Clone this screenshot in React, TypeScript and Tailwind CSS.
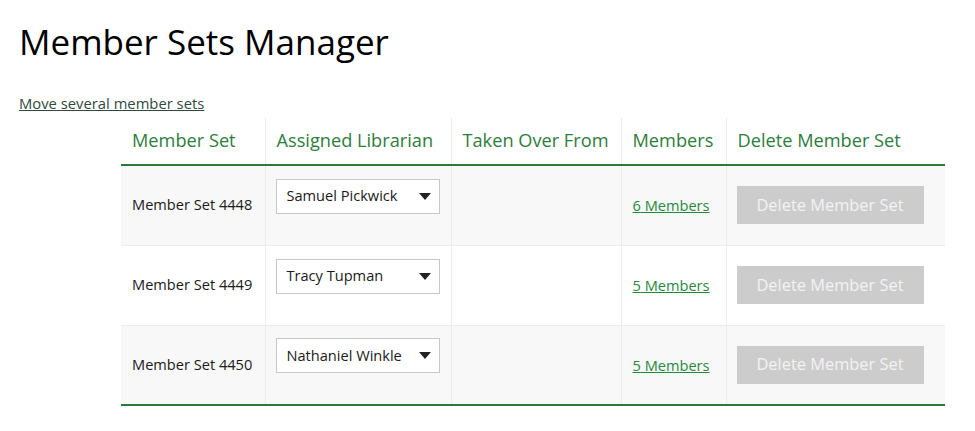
import { useState } from "react";

type MemberSet = {
  id: number;
  name: string;
  librarian: string;
  members: number;
};

const initialSets: MemberSet[] = [
  { id: 4448, name: "Member Set 4448", librarian: "Samuel Pickwick", members: 6 },
  { id: 4449, name: "Member Set 4449", librarian: "Tracy Tupman", members: 5 },
  { id: 4450, name: "Member Set 4450", librarian: "Nathaniel Winkle", members: 5 },
];

function LibrarianSelect({ value }: { value: string }) {
  return (
    <div className="mb-[18px] flex h-[35px] w-[164px] items-center justify-between border border-[#c8c8c8] bg-white pl-[10px] pr-[8px] text-[14.6px] text-[#1a1a1a]">
      <span>{value}</span>
      <svg width="12" height="7" viewBox="0 0 12 7" aria-hidden="true">
        <path d="M0 0h12L6 7z" fill="#222" />
      </svg>
    </div>
  );
}

export default function App() {
  const [sets] = useState(initialSets);

  return (
    <div
      className="min-h-screen bg-white px-[19px] pt-[18px] text-[#1a1a1a]"
      style={{ fontFamily: '"Open Sans", sans-serif' }}
    >
      <h1 className="text-[35px] leading-[48px] font-normal text-black">
        Member Sets Manager
      </h1>
      <a
        href="#"
        className="mt-[27px] inline-block text-[14.8px] leading-[20px] text-[#2f4a40] underline"
      >
        Move several member sets
      </a>

      <table className="mt-[3px] ml-[102px] w-[824px] table-fixed border-collapse">
        <colgroup>
          <col className="w-[144px]" />
          <col className="w-[186px]" />
          <col className="w-[170px]" />
          <col className="w-[105px]" />
          <col className="w-[219px]" />
        </colgroup>
        <thead>
          <tr className="h-[47px] border-b-2 border-[#2a7a3e]">
            {["Member Set", "Assigned Librarian", "Taken Over From", "Members", "Delete Member Set"].map(
              (h, i) => (
                <th
                  key={h}
                  className={`whitespace-nowrap px-[11px] text-left text-[18.2px] font-normal text-[#2e7d3c] ${
                    i > 0 ? "border-l border-[#ececec]" : ""
                  }`}
                >
                  {h}
                </th>
              )
            )}
          </tr>
        </thead>
        <tbody>
          {sets.map((s, idx) => (
            <tr
              key={s.id}
              className={`h-[80px] ${idx % 2 === 0 ? "bg-[#f8f8f8]" : "bg-white"} ${
                idx < sets.length - 1 ? "border-b border-[#ececec]" : "border-b-2 border-[#2a7a3e]"
              }`}
            >
              <td className="px-[11px] align-middle text-[14.6px]">{s.name}</td>
              <td className="border-l border-[#ececec] px-[10px] align-middle">
                <LibrarianSelect value={s.librarian} />
              </td>
              <td className="border-l border-[#ececec]" />
              <td className="border-l border-[#ececec] px-[11px] align-middle">
                <a href="#" className="text-[14.6px] text-[#1f8a3e] underline">
                  {s.members} Members
                </a>
              </td>
              <td className="border-l border-[#ececec] px-[10px] align-middle">
                <button
                  type="button"
                  disabled
                  className="h-[38px] w-[187px] bg-[#cccccc] text-[16.4px] text-[#f3f3f3]"
                >
                  Delete Member Set
                </button>
              </td>
            </tr>
          ))}
        </tbody>
      </table>
    </div>
  );
}
